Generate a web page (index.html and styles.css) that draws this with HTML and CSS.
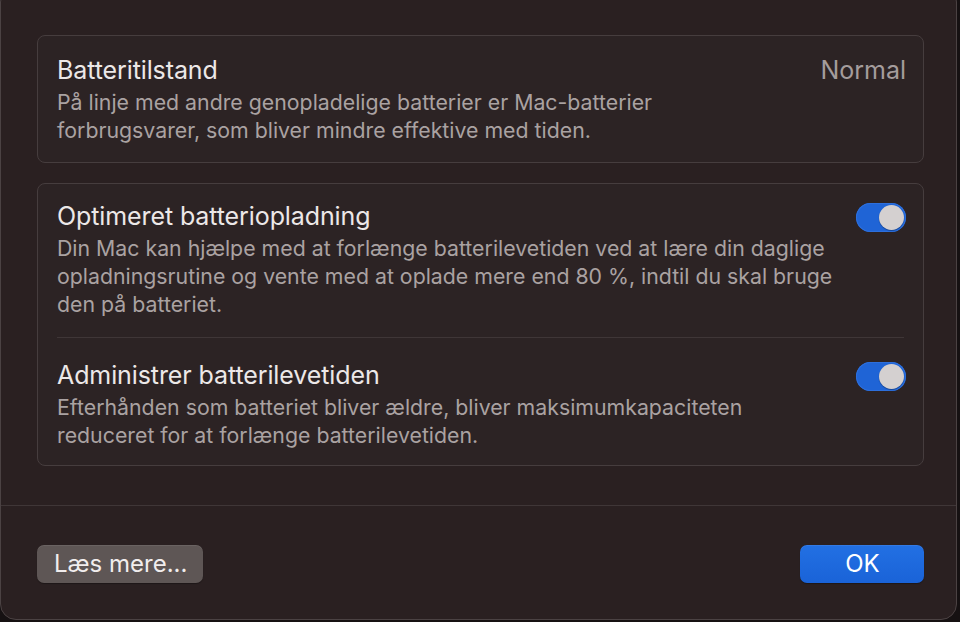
FILE: index.html
```html
<!DOCTYPE html>
<html lang="da">
<head>
  <meta charset="UTF-8">
  <meta name="viewport" content="width=device-width, initial-scale=1.0">
  <title>Batteri</title>
  <link rel="stylesheet" href="styles.css">
</head>
<body>

  <div class="window">
    <div class="content">

      <div class="card">
        <div class="row">
          <div class="row-text">
            <div class="row-title">Batteritilstand</div>
            <div class="row-desc">På linje med andre genopladelige batterier er Mac-batterier<br>forbrugsvarer, som bliver mindre effektive med tiden.</div>
          </div>
          <div class="row-value">Normal</div>
        </div>
      </div>

      <div class="card">
        <div class="row row-first">
          <div class="row-text">
            <div class="row-title">Optimeret batteriopladning</div>
            <div class="row-desc">Din Mac kan hjælpe med at forlænge batterilevetiden ved at lære din daglige<br>opladningsrutine og vente med at oplade mere end 80 %, indtil du skal bruge<br>den på batteriet.</div>
          </div>
          <button class="toggle on" aria-label="Optimeret batteriopladning"></button>
        </div>
        <div class="divider"></div>
        <div class="row row-last">
          <div class="row-text">
            <div class="row-title">Administrer batterilevetiden</div>
            <div class="row-desc">Efterhånden som batteriet bliver ældre, bliver maksimumkapaciteten<br>reduceret for at forlænge batterilevetiden.</div>
          </div>
          <button class="toggle on" aria-label="Administrer batterilevetiden"></button>
        </div>
      </div>

    </div>

    <div class="footer">
      <button class="btn">Læs mere...</button>
      <button class="btn btn-primary">OK</button>
    </div>
  </div>

</body>
</html>
```

FILE: styles.css
```css
body {
  font-family: Inter, "Noto Sans", "DejaVu Sans", sans-serif;
  background-color: #161112;
  color: #e9e5e5;
  margin: 0;
  height: 622px;
  overflow: hidden;
}

.window {
  margin-top: -14px;
  width: 957px;
  height: 634px;
  box-sizing: border-box;
  background-color: #2a2021;
  border: 1px solid #4b4243;
  border-radius: 16px;
  display: flex;
  flex-direction: column;
}

.content {
  padding: 48px 32px 0 36px;
  display: flex;
  flex-direction: column;
  gap: 20px;
}

.card {
  background-color: #2c2324;
  border: 1px solid #463d3e;
  border-radius: 8px;
}

.row {
  display: flex;
  justify-content: space-between;
  align-items: flex-start;
  padding: 20px 17px 18px 19px;
}

.row-first {
  padding: 18px 17px 19px 19px;
}

.row-last {
  padding: 23px 17px 16px 19px;
}

.row-title {
  font-size: 25px;
  line-height: 28px;
  color: #ece8e8;
  letter-spacing: -0.1px;
}

.row-desc {
  margin-top: 4px;
  font-size: 21.3px;
  line-height: 28px;
  color: #aaa2a2;
}

.row-value {
  font-size: 25px;
  line-height: 28px;
  color: #a49c9c;
}

.divider {
  height: 1px;
  margin: 0 19px;
  background-color: #3f3637;
}

.toggle {
  position: relative;
  flex: none;
  width: 50px;
  height: 29px;
  margin-top: 1px;
  padding: 0;
  border: none;
  border-radius: 15px;
  background-color: #1f64d6;
  box-shadow: inset 0 0 0 1px #2d6fdc;
}

.toggle::after {
  content: "";
  position: absolute;
  top: 2px;
  right: 2px;
  width: 25px;
  height: 25px;
  border-radius: 50%;
  background-color: #d4d0d0;
  box-shadow: 0 1px 1px rgba(0, 0, 0, 0.3);
}

.footer {
  margin-top: 39px;
  border-top: 1px solid #3f3637;
  padding: 39px 32px 0 36px;
  display: flex;
  justify-content: space-between;
}

.btn {
  font-family: Inter, "Noto Sans", "DejaVu Sans", sans-serif;
  font-size: 24px;
  height: 38px;
  padding: 0 16px 2px 17px;
  border: none;
  border-radius: 7px;
  background-color: #5e5655;
  color: #f1eded;
  box-shadow: inset 0 1px 0 rgba(255, 255, 255, 0.08), 0 1px 1px rgba(0, 0, 0, 0.3);
}

.btn-primary {
  width: 124px;
  background-color: #1b66dc;
  background-image: linear-gradient(#2270e3, #1a63d8);
  color: #ffffff;
}
```
